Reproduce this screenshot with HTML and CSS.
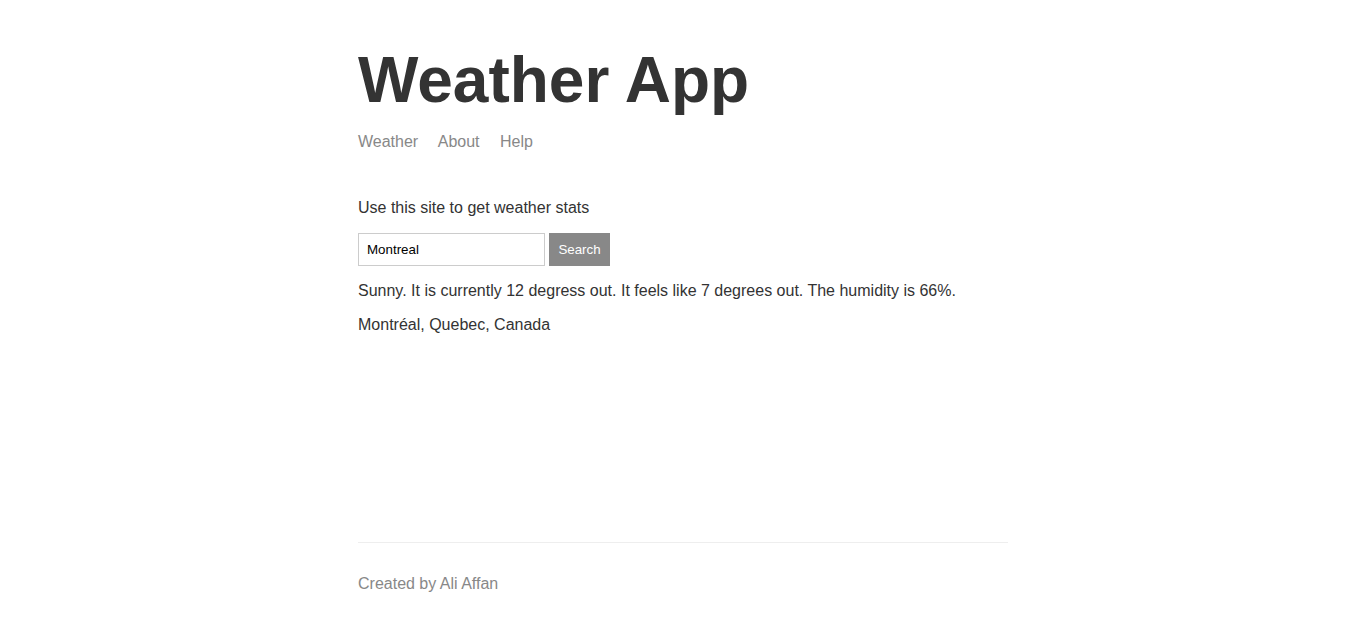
FILE: index.html
```html
<!DOCTYPE html>
<html lang="en">
<head>
<meta charset="utf-8">
<title>Weather</title>
<link rel="stylesheet" href="styles.css">
</head>
<body>
<div class="main-content">
  <header class="header">
    <h1 class="title">Weather App</h1>
    <nav class="nav">
      <a class="nav-link" href="#">Weather</a>
      <a class="nav-link" href="#">About</a>
      <a class="nav-link" href="#">Help</a>
    </nav>
  </header>
  <p class="intro">Use this site to get weather stats</p>
  <form class="search-form">
    <input class="search-input" type="text" value="Montreal" placeholder="Location">
    <button class="search-button" type="button">Search</button>
  </form>
  <p class="message">Sunny. It is currently 12 degress out. It feels like 7 degrees out. The humidity is 66%.</p>
  <p class="message">Montréal, Quebec, Canada</p>
</div>
<footer class="footer">
  <p class="footer-text">Created by Ali Affan</p>
</footer>
</body>
</html>
```

FILE: styles.css
```css
html {
  margin: 0;
}

body {
  margin: 0 auto;
  max-width: 650px;
  padding: 0 16px;
  min-height: 100vh;
  display: flex;
  flex-direction: column;
  color: #333333;
  font-family: "Liberation Sans", Arial, sans-serif;
  font-size: 16px;
}

.main-content {
  flex-grow: 1;
}

.header {
  padding-top: 43px;
  margin-bottom: 48px;
}

.title {
  font-size: 64px;
  font-weight: bold;
  margin: 0 0 16px;
}

.nav-link {
  color: #888888;
  text-decoration: none;
  margin-right: 16px;
}

.intro {
  margin: 0 0 16px;
}

.search-form {
  margin: 0 0 16px;
  display: flex;
  gap: 4px;
}

.search-input {
  box-sizing: border-box;
  width: 187px;
  height: 33px;
  border: 1px solid #cccccc;
  padding: 8px;
  font-family: "Liberation Sans", Arial, sans-serif;
  font-size: 13.333px;
  color: #000000;
  outline: none;
  margin: 0;
}

.search-button {
  box-sizing: border-box;
  width: 61px;
  height: 33px;
  border: 1px solid #888888;
  background: #888888;
  color: #ffffff;
  padding: 8px 0;
  font-family: "Liberation Sans", Arial, sans-serif;
  font-size: 13.333px;
  cursor: pointer;
  margin: 0;
}

.message {
  margin: 0 0 16px;
}

.footer {
  color: #888888;
  border-top: 1px solid #eeeeee;
  padding: 32px 0 24px;
}

.footer-text {
  margin: 0;
}
```
